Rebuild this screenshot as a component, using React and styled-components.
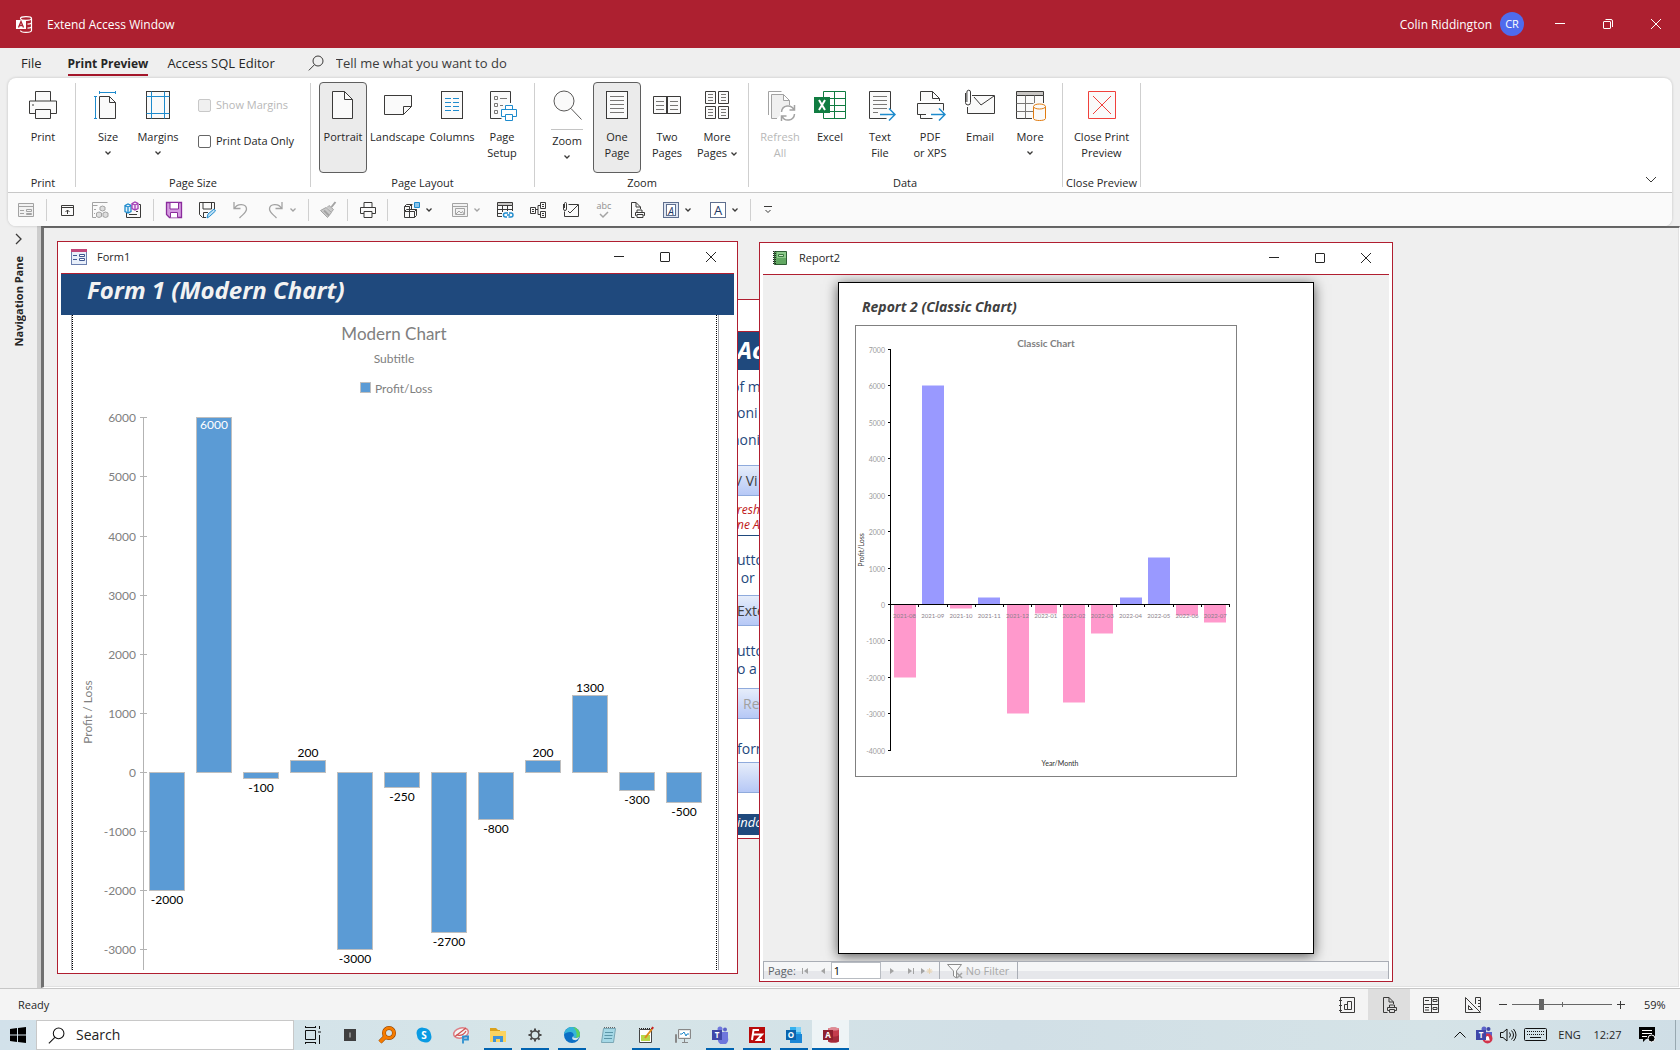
import React from "react";
import styled, { createGlobalStyle } from "styled-components";

const ui = '"Open Sans", "Noto Sans", sans-serif';
const chartFont = 'Lato, "Open Sans", sans-serif';
const red = "#ad2030";
const navy = "#1f497d";

const GlobalStyle = createGlobalStyle`
  *, *::before, *::after { box-sizing: border-box; }
  body { margin: 0; font: 11px/16px ${ui}; color: #262626; background: #efefef; overflow: hidden; }
  button { font: inherit; color: inherit; background: none; border: 0; padding: 0; margin: 0; }
  input { font: inherit; margin: 0; }
  svg { display: block; flex: none; }
`;

const Shell = styled.div`
  height: 100vh;
  display: flex;
  flex-direction: column;
`;

/* ---------- title bar ---------- */
const TitleBar = styled.header`
  display: flex;
  align-items: center;
  height: 48px;
  padding-left: 16px;
  background: ${red};
  color: #fff;
  font-size: 12px;
`;
const AppName = styled.h1`
  margin: 0 0 0 14px;
  padding-top: 2px;
  font-size: 12px;
  font-weight: 400;
  flex: 1;
`;
const UserName = styled.span`
  padding-top: 2px;
  margin-right: 8px;
`;
const Avatar = styled.span`
  width: 24px;
  height: 24px;
  border-radius: 50%;
  background: #4f6bed;
  font-size: 11px;
  line-height: 24px;
  text-align: center;
  margin-right: 12px;
`;
const WinButton = styled.button`
  width: ${(p) => p.$w || 48}px;
  display: grid;
  place-items: center;
  align-self: stretch;
`;

/* ---------- ribbon ---------- */
const TabRow = styled.nav`
  display: flex;
  height: 30px;
  padding: 5px 0 0 21px;
`;
const Tab = styled.button`
  font-size: ${(p) => (p.$active ? 12 : 13)}px;
  font-weight: ${(p) => (p.$active ? 700 : 400)};
  line-height: 21px;
  height: 23px;
  border-bottom: 2px solid ${(p) => (p.$active ? "#a4162a" : "transparent")};
  margin-right: ${(p) => p.$gap}px;
`;
const TellMe = styled.label`
  display: flex;
  align-items: center;
  height: 20px;
  flex: 1;
`;
const TellMeInput = styled.input`
  border: 0;
  outline: 0;
  background: none;
  padding: 0;
  margin-left: 12px;
  width: 220px;
  font-size: 13px;
  &::placeholder { color: #3b3b3b; opacity: 1; }
`;
const RibbonCard = styled.section`
  position: relative;
  z-index: 1;
  margin: 0 8px;
  height: 148px;
  border-radius: 8px;
  background: #fff;
  box-shadow: 0 0 3px rgba(0, 0, 0, 0.2);
  overflow: hidden;
`;
const Groups = styled.div`
  display: flex;
  height: 115px;
  border-bottom: 1px solid #c8c8c8;
`;
const Group = styled.section`
  display: flex;
  flex-direction: column;
  padding: 4px ${(p) => p.$right || 7}px 0 ${(p) => p.$left || 7}px;
`;
const GroupRow = styled.div`
  display: flex;
  height: 93px;
`;
const GroupName = styled.div`
  text-align: center;
  white-space: nowrap;
  line-height: 16px;
`;
const VLine = styled.span`
  width: 1px;
  flex: none;
  margin: 5px 0;
  background: #cfcfcf;
`;
const BigButton = styled.button`
  display: flex;
  flex-direction: column;
  align-items: center;
  width: ${(p) => p.$w || 48}px;
  margin: 0 ${(p) => (p.$w ? 0 : 1)}px;
  height: 91px;
  padding-top: 6px;
  border: 1px solid ${(p) => (p.$on ? "#5f5f5f" : "transparent")};
  border-radius: 4px;
  background: ${(p) => (p.$on ? "#ebebeb" : "none")};
  color: ${(p) => (p.disabled ? "#b8b8b8" : "#262626")};
  white-space: nowrap;
`;
const BigLabel = styled.span`
  margin-top: 8px;
  line-height: 16px;
  ${(p) => p.$split && "border-top: 1px solid #c4c4c4; padding: 3px 1px 0;"}
`;
const Down = styled.span`
  display: ${(p) => (p.$inline ? "inline-grid" : "grid")};
  height: ${(p) => (p.$inline ? 8 : 15)}px;
  margin-left: ${(p) => (p.$inline ? 4 : 0)}px;
  place-items: center;
  align-content: center;
`;
const CheckColumn = styled.div`
  display: flex;
  flex-direction: column;
  gap: 20px;
  padding: 15px 9px 0 15px;
`;
const CheckLabel = styled.label`
  display: flex;
  align-items: center;
  gap: 5px;
  height: 16px;
  color: ${(p) => (p.$off ? "#b8b8b8" : "#262626")};
  white-space: nowrap;
`;
const Check = styled.input`
  appearance: none;
  width: 13px;
  height: 13px;
  border: 1px solid #666;
  border-radius: 2px;
  background: #fff;
  &:disabled { border-color: #c8c8c8; background: #f0f0f0; }
`;
const Collapse = styled.button`
  margin: auto 15px 6px auto;
  width: 12px;
  height: 12px;
`;
const QuickBar = styled.div`
  display: flex;
  align-items: center;
  height: 33px;
  padding-left: 7px;
  background: #fafafa;
`;
const QuickButton = styled.button`
  display: flex;
  align-items: center;
  justify-content: center;
  gap: 5px;
  width: ${(p) => p.$w || 33}px;
  height: 28px;
`;
const QuickLine = styled.span`
  width: 1px;
  height: 22px;
  margin: 0 ${(p) => p.$after || 3}px 0 ${(p) => p.$before || 3}px;
  background: #d0d0d0;
`;

/* ---------- work area ---------- */
const Body = styled.div`
  display: flex;
  flex: 1;
  min-height: 0;
`;
const NavPane = styled.aside`
  width: 37px;
  display: flex;
  flex-direction: column;
  align-items: center;
  padding-top: 7px;
  gap: 11px;
`;
const NavTitle = styled.span`
  writing-mode: vertical-rl;
  transform: rotate(180deg);
  font-weight: 700;
  font-size: 11px;
`;
const Splitter = styled.div`
  width: 4px;
  background: #cdcdcd;
`;
const Workspace = styled.main`
  position: relative;
  flex: 1;
  border-style: solid;
  border-color: #6a6a6a #fff #fff #707070;
  border-width: 2px 1px 1px 3px;
  box-shadow: inset -1px -1px #e1e1e1;
  overflow: hidden;
`;
const Win = styled.section`
  position: absolute;
  left: ${(p) => p.$x}px;
  top: ${(p) => p.$y}px;
  width: ${(p) => p.$w}px;
  height: ${(p) => p.$h}px;
  display: flex;
  flex-direction: column;
  padding: 0 3px ${(p) => (p.$flush ? 2 : 3)}px;
  border: 1px solid #b01e30;
  background: #fff;
`;
const WinTitle = styled.div`
  display: flex;
  align-items: center;
  height: 32px;
  flex: none;
  padding: 0 0 2px 10px;
  border-bottom: 1px solid #b01e30;
`;
const WinName = styled.h2`
  flex: 1;
  margin: 0 0 0 ${(p) => p.$gap}px;
  font-size: 11px;
  font-weight: 400;
`;

/* form window */
const FormHeader = styled.h3`
  margin: 0;
  height: 41px;
  flex: none;
  padding: 0 26px;
  background: ${navy};
  color: #f2f2f2;
  font: italic 700 24px/32px ${ui};
`;
const FormBody = styled.div`
  flex: 1;
  min-height: 0;
  margin: 0 15px 0 10px;
  padding-right: 1px;
  border: solid #a6a6ae;
  border-width: 0 1px;
  overflow: hidden;
`;
const ChartFrame = styled.div`
  height: 100%;
  border: dotted #000;
  border-width: 0 1px;
  overflow: hidden;
`;
const ChartText = styled.text`
  font-family: ${chartFont};
  font-size: ${(p) => p.$s || 12}px;
  font-weight: ${(p) => (p.$b ? 700 : 400)};
  fill: ${(p) => p.$c || "#808080"};
  text-anchor: ${(p) => p.$a || "middle"};
`;

/* launcher form that lies behind the two windows */
const LauncherClip = styled.div`
  flex: 1;
  min-height: 0;
  display: flex;
  flex-direction: column;
  margin-left: 43px;
`;
const Spacer = styled.span`
  flex: 1;
`;
const Banner = styled.div`
  height: ${(p) => p.$h}px;
  flex: none;
  padding-left: 6px;
  background: ${navy};
  color: #fff;
  font: italic ${(p) => (p.$h > 30 ? "700 24px/36px" : "400 13px/17px")} ${ui};
`;
const Note = styled.p`
  margin: ${(p) => p.$top}px 0 0;
  padding-left: ${(p) => p.$in || 0}px;
  color: ${(p) => (p.$red ? "#c01818" : navy)};
  font: ${(p) => (p.$red ? "italic 12px/15px" : "14px/18px")} ${ui};
  white-space: pre;
`;
const FormButton = styled.button`
  margin-top: ${(p) => p.$top}px;
  height: 31px;
  flex: none;
  width: 100%;
  padding-left: ${(p) => p.$in || 6}px;
  border: solid #8faadc;
  border-width: 1px 0;
  background: linear-gradient(#e6edfa, #b6c8f6);
  color: ${(p) => (p.disabled ? "#a0a0a0" : "#404040")};
  font-size: 14px;
  text-align: left;
  white-space: pre;
`;
const Divider = styled.hr`
  margin: 3px 0 0;
  width: 100%;
  border: 0;
  border-top: 1px solid ${navy};
`;

/* report window */
const ReportArea = styled.div`
  flex: 1;
  min-height: 0;
  background: #efefef;
  padding: 7px 75px 0;
  overflow: hidden;
`;
const Paper = styled.article`
  height: 672px;
  padding: 14px 76px 0 16px;
  background: #fff;
  border: 1px solid #000;
  box-shadow: 0 2px 12px rgba(0, 0, 0, 0.65);
`;
const ReportTitle = styled.h3`
  margin: 0 0 8px 7px;
  font: italic 700 14px/20px ${ui};
  color: #404040;
`;
const ReportChart = styled.div`
  height: 452px;
  border: 1px solid #808080;
  overflow: hidden;
`;
const RecordBar = styled.div`
  display: flex;
  align-items: stretch;
  height: 18px;
  flex: none;
  border: 1px solid #a9adb5;
  border-bottom: 0;
  background: linear-gradient(#f5f6f7 55%, #e6e7eb 55%);
  color: #5b5f66;
  line-height: 18px;
`;
const PageLabel = styled.label`
  display: flex;
  padding-left: 4px;
`;
const PageInput = styled.input`
  width: 50px;
  height: 17px;
  padding: 0 0 0 2px;
  border: 1px solid #b8bcc2;
  background: #fff;
  color: #000;
`;
const RecordButton = styled.button`
  width: ${(p) => p.$w || 16}px;
  display: grid;
  place-items: center;
`;
const FilterButton = styled.button`
  display: flex;
  align-items: center;
  gap: 3px;
  margin-left: 4px;
  padding: 0 8px 0 7px;
  border: solid #a9adb5;
  border-width: 0 1px;
  color: #a8a8a8;
`;

/* ---------- status bar ---------- */
const StatusBar = styled.footer`
  display: flex;
  align-items: center;
  height: 32px;
  border-top: 1px solid #c6c6c6;
  background: #f4f4f4;
  padding-left: 18px;
`;
const Grow = styled.span`
  flex: 1;
`;
const ViewButton = styled.button`
  width: 42px;
  align-self: stretch;
  display: grid;
  place-items: center;
  background: ${(p) => (p.$on ? "#dedede" : "none")};
`;
const ZoomStep = styled.button`
  width: 18px;
  height: 18px;
  display: grid;
  place-items: center;
`;
const ZoomRange = styled.input`
  appearance: none;
  width: 100px;
  height: 12px;
  background:
    linear-gradient(#666, #666) 50px 50% / 1px 5px no-repeat,
    linear-gradient(#666, #666) 0 50% / 100% 1px no-repeat;
  &::-webkit-slider-thumb { appearance: none; width: 5px; height: 11px; background: #666; }
`;
const ZoomValue = styled.output`
  width: 22px;
  margin: 0 14px;
`;

/* ---------- taskbar ---------- */
const Taskbar = styled.footer`
  display: flex;
  height: 30px;
  background: linear-gradient(90deg, #d2e1ea, #d6e5e8 35%, #d1dfe6 60%, #d5e3e7 85%, #cfdee6);
`;
const Start = styled.button`
  width: 36px;
  display: grid;
  place-items: center;
`;
const SearchBox = styled.label`
  display: flex;
  align-items: center;
  width: 258px;
  border: 1px solid #c8c8c8;
  background: #fff;
  padding-left: 11px;
`;
const SearchInput = styled.input`
  border: 0;
  outline: 0;
  width: 180px;
  margin-left: 11px;
  padding: 0;
  font-size: 14px;
  &::placeholder { color: #222; opacity: 1; }
`;
const TaskButton = styled.button`
  width: 37px;
  display: grid;
  place-items: center;
  padding-top: 2px;
  border-bottom: 2px solid transparent;
  background:
    linear-gradient(${(p) => (p.$run ? "#0063b1, #0063b1" : "transparent, transparent")}) 50% 100% / ${(p) => (p.$on ? "100%" : "28px")} 2px no-repeat border-box,
    ${(p) => (p.$on ? "#eef4f6" : "transparent")};
`;
const Tray = styled.div`
  display: flex;
  align-items: center;
  margin-left: auto;
  padding-right: 4px;
`;
const TrayItem = styled.button`
  width: ${(p) => p.$w}px;
  height: 30px;
  display: grid;
  place-items: center;
`;
const ShowDesktop = styled.span`
  width: 1px;
  margin-left: 9px;
  align-self: stretch;
  background: #98a8b0;
`;

/* ---------- icon helpers ---------- */
const K = "#3b3a39";
const G = "#a3a3a3";
const B = "#1e8bcd";

function Ico({ s = 32, w = s, h = s, c = K, sw = 1, children }) {
  return (
    <svg width={w} height={h} viewBox={`0 0 ${w} ${h}`} fill="none" stroke={c} strokeWidth={sw} aria-hidden="true">
      {children}
    </svg>
  );
}
const Chevron = ({ c = K, w = 6 }) => (
  <Ico w={w} h={w} c={c} sw={w > 8 ? 1 : 1.3}>
    <path d={w > 8 ? `M1 3l${w / 2 - 1} ${w / 2 - 1} ${w / 2 - 1}-${w / 2 - 1}` : "M.5 1.5L3 4l2.5-2.5"} />
  </Ico>
);
const Lens = ({ s = 16, c = K }) => (
  <svg width={s} height={s} viewBox="0 0 16 16" fill="none" stroke={c} aria-hidden="true">
    <circle cx="10" cy="6" r="5" />
    <path d="M6.5 9.7L.8 15.4" />
  </svg>
);
const Minimise = () => <Ico s={12} c="currentColor"><path d="M1 5.5h10" /></Ico>;
const Maximise = () => <Ico s={12} c="currentColor"><rect x="1.5" y="1.5" width="9" height="9" rx=".5" /></Ico>;
const Cross = () => <Ico s={12} c="currentColor"><path d="M1 1l10 10M11 1L1 11" /></Ico>;
const Restore = () => (
  <Ico s={12} c="currentColor"><rect x="1.5" y="3.5" width="7" height="7" rx=".5" /><path d="M3.5 1.5h5.5q1.500 0 1.500 1.500V9" /></Ico>
);

const printer = (
  <>
    <path fill="#fafafa" d="M8.500 12V2.500h15V12M8.500 24.500h-6v-12.500h27v12.500h-6" />
    <path fill="#fafafa" d="M8.500 20.500h15v9h-15z" />
    <path d="M5 16h2" />
  </>
);
const rows = (x, w, ys) => ys.map((y) => `M${x} ${y}h${w}`).join("");

const ICONS = {
  print: <Ico>{printer}</Ico>,
  size: (
    <Ico>
      <path fill="#fafafa" d="M7.500 7.500h10l6 6v16h-16z" /><path d="M17.500 7.500v6h6" />
      <path stroke={B} d="M7.500 3.500h16M7.500 2v3M23.500 2v3M3.500 7.500v22M2 7.500h3M2 29.500h3" />
    </Ico>
  ),
  margins: (
    <Ico>
      <rect x="4.500" y="2.500" width="23" height="27" fill="#fafafa" />
      <path stroke={B} d="M9.500 2.500v27M22.500 2.500v27M4.500 7.500h23M4.500 24.500h23" />
    </Ico>
  ),
  portrait: <Ico><path fill="#fafafa" d="M5.500 2.500h12l8 8v19h-20z" /><path d="M17.500 2.500v8h8" /></Ico>,
  landscape: <Ico><path fill="#fafafa" d="M2.500 6.500h27v11l-8 8h-19z" /><path d="M29.500 17.500h-8v8" /></Ico>,
  columns: (
    <Ico>
      <rect x="5.500" y="2.500" width="21" height="27" fill="#fafafa" />
      <path stroke={B} d={rows(9, 6, [9.5, 13.5, 17.5, 21.5]) + rows(17, 6, [9.5, 13.5, 17.5, 21.5])} />
    </Ico>
  ),
  pageSetup: (
    <Ico>
      <path fill="#fafafa" d="M24.500 14V2.500h-20v27h11" />
      <path stroke="#797775" d="M8.500 7.500h3v3h-3zM8.500 14.500h3v3h-3zM8.500 21.500h3v3h-3zM14 9.500h7M14 16.500h3" />
      <path stroke={B} fill="#fff" d="M19.500 20v-3.500h7V20M19.500 27.500h-4v-7h15v7h-4M19.500 25.500h7v6h-7z" />
    </Ico>
  ),
  zoom: <Ico c="#5a5958"><circle cx="13" cy="12" r="10" fill="#fafafa" /><path d="M20 19.500L30.500 30.500" /></Ico>,
  onePage: (
    <Ico><rect x="5.500" y="2.500" width="21" height="27" fill="#fafafa" /><path stroke="#797775" d={rows(9, 14, [7.5, 11.5, 15.5, 19.5, 23.5])} /></Ico>
  ),
  twoPages: (
    <Ico>
      <path fill="#fafafa" d="M2.500 7.500h27v17h-27zM15.500 7.500v17M16.500 7.500v17" />
      <path stroke="#797775" d={rows(5, 8, [12.5, 16.5, 20.5]) + rows(19, 8, [12.5, 16.5, 20.5])} />
    </Ico>
  ),
  morePages: (
    <Ico>
      <path fill="#fafafa" d="M4.500 2.500h10v12h-10zM17.500 2.500h10v12h-10zM4.500 17.500h10v12h-10zM17.500 17.500h10v12h-10z" />
      <path stroke="#797775" d={[5.5, 8.5, 11.5, 20.5, 23.5, 26.5].map((y) => `M7 ${y}h5M20 ${y}h5`).join("")} />
    </Ico>
  ),
  refresh: (
    <Ico c={G}>
      <path d="M4.500 26V2.500h13" /><path fill="#f0f0f0" d="M13 29.500H7.500v-24h12l6 6v5M19.500 5.500v6h6" />
      <circle cx="24" cy="24" r="8" fill="#fff" stroke="none" />
      <path strokeWidth="1.500" d="M17.500 23a6.500 6.500 0 0 1 12.500-2M30.500 16v5h-5M30.500 25a6.500 6.500 0 0 1-12.500 2M17.500 32v-5h5" />
    </Ico>
  ),
  excel: (
    <Ico c="#107c41">
      <path fill="#fff" d="M9.500 2.500h22v27h-22zM20.500 2.500v27M9.500 9.500h22M9.500 16.500h22M9.500 22.500h22" />
      <path fill="#107c41" stroke="none" d="M0 8h16v16H0z" /><path stroke="#fff" strokeWidth="2" d="M5 11l6 10M11 11L5 21" />
    </Ico>
  ),
  textFile: (
    <Ico>
      <path fill="#fafafa" d="M26.500 20V2.500h-21v27h17" />
      <path stroke="#797775" d={rows(9, 14, [7.5, 11.5, 15.5, 19.5]) + rows(9, 5, [23.5])} />
      <path stroke={B} strokeWidth="1.500" d="M16 25.500h15M25 19.500l6 6-6 6" />
    </Ico>
  ),
  pdf: (
    <Ico>
      <path fill="#fafafa" d="M6.500 12V2.500h12l7 7V12M18.500 2.500v7h7M6.500 25v4.500h12" />
      <path fill="#fafafa" d="M12 25.500H3.500v-11h26v7" />
      <path stroke={B} strokeWidth="1.500" d="M17 25.500h14M25 19.500l6 6-6 6" />
    </Ico>
  ),
  email: (
    <Ico>
      <path fill="#fafafa" d="M8 6.500h22.500v18h-27V18" /><path d="M10 8l7 8 13-9" />
      <path d="M1.500 4v9.500a2.500 2.500 0 0 0 5 0V3a1.800 1.800 0 0 0-3.600 0v10" />
    </Ico>
  ),
  more: (
    <Ico>
      <rect x="2.500" y="2.500" width="27" height="27" fill="#fafafa" stroke="none" />
      <path fill="#c8c6c4" d="M2.500 2.500h27v4h-27z" />
      <path d="M2.500 6.500v23H18M29.500 6.500V14" /><path stroke="#797775" d="M11.500 6.500v23M20.500 6.500V14M2.500 14.500h17M2.500 22.500h17" />
      <path stroke="#e07b10" fill="#fafafa" d="M19.500 17.500v12c0 2.700 12 2.700 12 0v-12" /><ellipse cx="25.500" cy="17.500" rx="6" ry="2.500" stroke="#e07b10" fill="#fafafa" />
    </Ico>
  ),
  close: <Ico c="#f0413c"><path fill="#fafafa" d="M2.500 2.500h27v27h-27z" /><path d="M7 7l18 18M25 7L7 25" /></Ico>,
};

/* 18px drawings of the quick access toolbar */
const Q = {
  form: <Ico s={18} c={G}><path fill="#f2f2f2" d="M1.500 2.500h15v13h-15zM1.500 5.500h15M9.500 8.500h5v2h-5zM9.500 12.500h5v1h-5zM3 9.500h4M3 12.500h4" /></Ico>,
  dock: <Ico s={18}><path d="M3.500 4.500h12v10h-12zM3.500 6.500h12M9.500 13V9M7.500 11l2-2 2 2" /></Ico>,
  cubes: <Ico s={18} c={G}><path d="M5 16.500H1.500V1.500h15M1.500 4.500h5M3 8.500h2M3 12.500h1" /><path fill="#dedede" d="M9 6l2.500-1L14 6v3l-2.500 1L9 9zM5.500 12l2.500-1 2.500 1v3.500L8 16.500l-2.500-1zM12 12l2.500-1 2.500 1v3.500l-2.500 1-2.500-1z" /></Ico>,
  colorCubes: <Ico s={18}><path d="M2.500 12v4.500h14v-13H15M5 13.500h8M12 10.500h2" /><path fill="#e3f2fb" stroke={B} strokeWidth="1.300" d="M1 4.500L4 3l3 1.500v6L4 12l-3-1.500zM1 4.500L4 6l3-1.500M4 6v6" /><path fill="#f6e6f8" stroke="#a33fb5" strokeWidth="1.300" d="M8 2.500L11 1l3 1.500v5L11 9 8 7.500zM8 2.500L11 4l3-1.500M11 4v5" /></Ico>,
  save: <Ico s={18} c="#8a2c9c"><path fill="#d59be0" strokeWidth="1.300" d="M1.500 1.500h15v15h-12l-3-3z" /><path fill="#fff" d="M5 1.500h8.500V8H5zM5.500 16.500v-5h7v5" /></Ico>,
  saveAs: <Ico s={18}><path d="M16.500 8V1.500h-15v12l3 3H8M5 1.500V8h8.500V1.500M5.500 16.500v-5H10" /><path stroke={B} fill="#bfe0f5" d="M9 17l1-4 6-5 1.500 2-6 5.500z" /></Ico>,
  undo: <Ico s={18} c={G} sw={1.3}><path d="M3 1v6.500h6.500M3.500 7.500C6 2 15.500 2.500 15.500 8c0 3-2 4-7 9" /></Ico>,
  redo: <Ico s={18} c={G} sw={1.3}><path d="M15 1v6.500H8.500M14.500 7.500C12 2 2.500 2.500 2.500 8c0 3 2 4 7 9" /></Ico>,
  brush: <Ico s={18} c={G}><path fill="#c9c9c9" d="M1.500 9.500L7 6.500l5.500 5-4 5zM8 6.500l2-2 4.500 4-2 2.500" /><path strokeWidth="2" d="M12.500 6l4-5M5 9.500l5 5" /></Ico>,
  print: <Ico s={18}><path d="M5 6V1.500h8V6M5 12.500H1.500v-6h15v6H13M5 10.500h8v6H5z" /></Ico>,
  blocks: <Ico s={18}><path d="M1.500 10.500l2-2h10l-2 2zM1.500 10.500v6h10v-6M6.500 10.500v6M11.500 16.500l2-2v-6M1.500 10V5.500l2-2h6M1.500 5.500h5v5M6.500 5.500l2-2M8.500 8V4" /><path fill="#8cc4ea" stroke={B} d="M11.500 1.500h5v5h-5z" /></Ico>,
  picture: <Ico s={18} c={G}><path fill="#f2f2f2" d="M1.500 2.500h15v13h-15zM1.500 5.500h15M4.500 7.500h9v6h-9zM5 13l3-3 2 2 1.500-1.500L13 13" /></Ico>,
  linkTable: <Ico s={18}><path fill="#c8c6c4" d="M1.500 1.500h15v3h-15z" /><path d="M1.500 4.500v11H6M16.500 4.500V10M6.500 4.500V11M11.500 4.500V10M1.500 8.500h15M1.500 12.500H6" /><path stroke={B} strokeWidth="1.400" d="M11 16H9.500a2 2 0 0 1 0-4H12M13 12h2a2 2 0 0 1 0 4h-2.500M11 14h3" /></Ico>,
  relations: <Ico s={18}><path d="M1.500 6.500h5v6h-5zM11.500 1.500h5v6h-5zM11.500 10.500h5v6h-5zM6.500 8.500h2.500v-4h2.500M9 8.500v5h2.500M3 8.500h2M3 10.500h2M13 3.500h2M13 5.500h2M13 12.500h2M13 14.500h2" /></Ico>,
  mail: <Ico s={18}><path d="M6.500 3.500h10v12h-14V10.500M6 10l2 2 8-8M1.500 3v5a1.500 1.500 0 0 0 3 0V2.500a1 1 0 0 0-2 0V7" /></Ico>,
  preview: <Ico s={18}><path d="M12.500 8V6l-4.500-4.500H3.500v15h3M8 1.500V6h4.500M9 11V9h5v2M8.500 14.500h-1v-3h9v3h-1M9 13.500h6v3H9z" /></Ico>,
};
const letter = (boxed) => (
  <svg width="18" height="18" viewBox="0 0 18 18" aria-hidden="true">
    <rect x="1.500" y="1.500" width="15" height="15" fill={boxed ? "#dfe6f2" : "#fff"} stroke="#5f6f8f" />
    {boxed && <rect x="4.500" y="3.500" width="9" height="11" fill="#fff" stroke="#5f6f8f" />}
    <text x="9" y="14" textAnchor="middle" fontFamily="Open Sans" fontSize={boxed ? 10 : 13} fontStyle={boxed ? "italic" : "normal"} fill="#1f3864">A</text>
  </svg>
);
const abc = (
  <svg width="20" height="24" viewBox="0 0 20 24" aria-hidden="true">
    <text x="10" y="11" textAnchor="middle" fontFamily="Open Sans" fontSize="9" fill="#8f8f8f">abc</text>
    <path d="M6 16l3 3 5-5" fill="none" stroke={G} strokeWidth="1.500" />
  </svg>
);

/* ---------- data ---------- */
const MONTHS = ["2021-08", "2021-09", "2021-10", "2021-11", "2021-12", "2022-01", "2022-02", "2022-03", "2022-04", "2022-05", "2022-06", "2022-07"];
const VALUES = [-2000, 6000, -100, 200, -3000, -250, -2700, -800, 200, 1300, -300, -500];

function ModernChart() {
  const y = (v) => 457.5 - Math.round((v * 59.1) / 1000);
  return (
    <svg width="643" height="655" viewBox="0 0 643 655" role="img" aria-label="Modern Chart">
      <ChartText x="321" y="25" $s={17}>Modern Chart</ChartText>
      <ChartText x="321" y="48">Subtitle</ChartText>
      <rect x="287.5" y="67.5" width="10" height="10" fill="#5b9bd5" stroke="#bfbfbf" />
      <ChartText x="302" y="78" $a="start">Profit/Loss</ChartText>
      <ChartText transform="translate(19 397) rotate(-90)">Profit / Loss</ChartText>
      <path stroke="#b3b3b3" d="M70.5 102.500V655" />
      {[6000, 5000, 4000, 3000, 2000, 1000, 0, -1000, -2000, -3000].map((v) => (
        <React.Fragment key={v}>
          <path stroke="#b3b3b3" d={`M67 ${y(v)}h7`} />
          <ChartText x="63" y={y(v) + 4} $a="end">{v}</ChartText>
        </React.Fragment>
      ))}
      {VALUES.map((v, i) => {
        const x = 76.5 + Math.round(47.04 * i);
        const ly = v === 6000 ? y(v) + 11 : v > 0 ? y(v) - 4 : y(v) + 13;
        return (
          <React.Fragment key={i}>
            <rect x={x} y={Math.min(y(v), y(0))} width="35" height={Math.abs(y(v) - y(0))} fill="#5b9bd5" stroke="#bfbfbf" />
            <ChartText x={x + 17.5} y={ly} $c={v === 6000 ? "#fff" : "#000"}>{v}</ChartText>
          </React.Fragment>
        );
      })}
    </svg>
  );
}

function ClassicChart() {
  const y = (v) => 278.5 - Math.round((v * 36.45) / 1000);
  return (
    <svg width="380" height="450" viewBox="0 0 380 450" role="img" aria-label="Classic Chart">
      <ChartText x="190" y="21" $s={10} $b>Classic Chart</ChartText>
      <ChartText transform="translate(8 224) rotate(-90)" $s={7} $c="#404040">Profit/Loss</ChartText>
      <ChartText x="204" y="440" $s={7} $c="#303030">Year/Month</ChartText>
      {VALUES.map((v, i) => (
        <rect key={i} x={Math.round(37.5 + 28.25 * i)} y={Math.min(y(v), y(0))} width="22" height={Math.abs(y(v) - y(0))} fill={v > 0 ? "#9999ff" : "#ff99cc"} />
      ))}
      <path stroke="#000" d={`M34.5 ${y(7000)}V${y(-4000)}M34.5 278.500H373.500`} />
      {[7000, 6000, 5000, 4000, 3000, 2000, 1000, 0, -1000, -2000, -3000, -4000].map((v) => (
        <React.Fragment key={v}>
          <path stroke="#000" d={`M32 ${y(v)}h3`} />
          <ChartText x="29" y={y(v) + 3} $a="end" $s={7} $c="#9a9a9a">{v}</ChartText>
        </React.Fragment>
      ))}
      {MONTHS.map((m, i) => (
        <React.Fragment key={m}>
          <path stroke="#000" d={`M${Math.round(34 + 28.25 * (i + 1)) + 0.5} 278v3`} />
          <ChartText x={48.5 + 28.25 * i} y="292" $s={6} $c="#8a808a">{m}</ChartText>
        </React.Fragment>
      ))}
    </svg>
  );
}

/* ---------- small building blocks ---------- */
function Big({ icon, lines, down, split, ...rest }) {
  return (
    <BigButton {...rest}>
      {ICONS[icon]}
      <BigLabel $split={split}>
        {lines.map((l, i) => (
          <React.Fragment key={l}>
            {i > 0 && <br />}
            {l}
          </React.Fragment>
        ))}
        {down === "inline" && <Down $inline><Chevron /></Down>}
      </BigLabel>
      {down === true && <Down><Chevron /></Down>}
    </BigButton>
  );
}

function RibbonGroup({ name, left, right, children }) {
  return (
    <>
      <Group $left={left} $right={right}>
        <GroupRow>{children}</GroupRow>
        <GroupName>{name}</GroupName>
      </Group>
      <VLine />
    </>
  );
}

function MdiWindow({ title, icon, gap, controls = true, children, ...box }) {
  return (
    <Win {...box}>
      <WinTitle>
        {icon}
        <WinName $gap={gap}>{title}</WinName>
        {controls && (
          <>
            <WinButton $w={46} aria-label="Minimise"><Minimise /></WinButton>
            <WinButton $w={46} aria-label="Maximise"><Maximise /></WinButton>
            <WinButton $w={46} aria-label="Close"><Cross /></WinButton>
          </>
        )}
      </WinTitle>
      {children}
    </Win>
  );
}

function LauncherBody() {
  return (
    <LauncherClip>
      <Banner $h={38}>Ac</Banner>
      <Note $top={8}>of m</Note>
      <Note $top={8} $in={6}>oni</Note>
      <Note $top={9}>noni</Note>
      <FormButton $top={16}>{"/ Vi"}</FormButton>
      <Note $red $top={6} $in={6}>{"resh\nne A"}</Note>
      <Divider />
      <Note $top={15} $in={6}>{"utto\n or n"}</Note>
      <FormButton $top={8}>Exte</FormButton>
      <Note $top={16} $in={6}>{"utto\no a s"}</Note>
      <FormButton $top={10} $in={12} disabled>Re</FormButton>
      <Note $top={21} $in={6}>forn</Note>
      <FormButton $top={4} />
      <Spacer />
      <Banner $h={21}>indo</Banner>
    </LauncherClip>
  );
}

const formIcon = (
  <svg width="16" height="16" viewBox="0 0 16 16" aria-hidden="true">
    <rect x=".5" y=".5" width="15" height="15" fill="#e8effa" stroke="#6b7fae" />
    <path fill="#c2477a" d="M0 0h16v3H0z" />
    <path d="M2 6.500h4M2 10.500h4M8.500 5.500h5v2h-5zM8.500 9.500h5v2h-5z" fill="#fff" stroke="#3f568f" />
  </svg>
);
const reportIcon = (
  <svg width="14" height="14" viewBox="0 0 14 14" aria-hidden="true">
    <path fill="#62a862" stroke="#2f5f35" d="M1.500.5h12v13h-12z" />
    <path fill="#8cc98a" d="M4 1h9v6H4z" />
    <path fill="#cfe8c8" stroke="#3b7a40" d="M5.500 3.500h5v2h-5z" />
    <path stroke="#222" strokeDasharray="1 1" d="M.5 0v14M2.500 0v14" />
  </svg>
);
const accessLogo = (
  <svg width="17" height="17" viewBox="0 0 17 17" fill="none" stroke="#fff" strokeWidth="1.200" aria-hidden="true">
    <ellipse cx="10" cy="2.500" rx="5.500" ry="1.800" /><path d="M15.500 2.500v12c0 2.500-11 2.500-11 0M15.500 6.500c0 1-2 1.500-4 1.700M15.500 10.500c0 1-2 1.500-4 1.700" />
    <path fill="#fff" stroke="none" d="M0 4h10v9H0z" /><path stroke={red} strokeWidth="1.300" d="M2.500 11.500L5 5.500l2.500 6M3.500 9.500h3" />
  </svg>
);

/* ---------- taskbar drawings ---------- */
const T = (children) => <svg width="18" height="18" viewBox="0 0 18 18" fill="none" aria-hidden="true">{children}</svg>;
const tile = (fill, l, extra) => T(<>{extra}<path fill={fill} d="M1 4h10v10H1z" /><text x="6" y="12" textAnchor="middle" fontFamily="Open Sans" fontWeight="700" fontSize="8" fill="#fff">{l}</text></>);
const TASKS = [
  ["Task View", T(<path stroke="#111" d="M1 1.500h11M1 16.500h11M1.500 4.500h10v9h-10zM1.500 0v2M11.500 0v2M1.500 16v2M11.500 16v2M15.500 0v3M15.500 9v9M14 6h3" />)],
  ["Notes", T(<><path fill="#3f3f3f" d="M3 3h12v12H3z" /><path stroke="#ccc" d="M9 6.500v5" /></>)],
  ["Search tool", T(<><path stroke="#8a3f00" strokeWidth="4.500" d="M7.500 10.500L2 16" /><circle cx="11" cy="7" r="5" stroke="#8a3f00" strokeWidth="4" /><circle cx="11" cy="7" r="5" stroke="#f57c00" strokeWidth="3" /><path stroke="#f57c00" strokeWidth="3.500" d="M7.500 10.500L2 16" /></>)],
  ["Skype", T(<><circle cx="7" cy="7" r="5.500" fill="#0a9be3" /><circle cx="11" cy="11" r="5.500" fill="#0a9be3" /><circle cx="9" cy="9" r="7" fill="#0a9be3" /><text x="9" y="13" textAnchor="middle" fontFamily="Open Sans" fontWeight="700" fontSize="10" fill="#fff">S</text></>)],
  ["Snipping Tool", T(<><ellipse cx="9" cy="7" rx="7.500" ry="5" transform="rotate(-15 9 7)" fill="#f4f4f4" stroke="#dd7f86" strokeWidth="1.500" /><path stroke="#d05050" strokeWidth="1.200" d="M3 10.500L14 2M4 9c4 1 8 0 10-4" /><path stroke="#2d8fd0" strokeWidth="1.800" d="M11 9.500v8M11 10.500h6M12 13.500h4v-3" /></>)],
  ["File Explorer", T(<><path fill="#dba21c" d="M1 2h6l2 2h2v2H1z" /><path fill="#fbd35f" d="M1 5h16v11H1z" /><path fill="#3f93d8" d="M4 10h10v6h-3v-3H7v3H4z" /></>), 1],
  ["Settings", T(<><circle cx="9" cy="9" r="4" stroke="#4a4a4a" strokeWidth="1.600" /><path stroke="#4a4a4a" strokeWidth="2" d="M9 2.500V5M9 13v2.500M2.500 9H5M13 9h2.500M4.400 4.400L6 6M12 12l1.600 1.600M4.400 13.600L6 12M12 6l1.600-1.600" /></>), 1],
  ["Edge", T(<><circle cx="9" cy="9" r="8" fill="#0c6fc5" /><path fill="#36b5d8" d="M1 8.500C2 3.500 5 1 9 1s8 3.500 8 7.500c0 2.500-2 3.500-4.500 3.500-2 0-3-.8-2-2 .8-1.500-.5-4-3.500-4-2.500 0-5 1-6 2.500z" /><path fill="#5fd35c" d="M10 1.100A8 8 0 0 1 17 8.500c0 2.500-2 3.500-4 3.500 1.500-4 .5-8-3-10.900z" /><path fill="#d4e4ec" d="M10.500 10c-.8 1.200.2 2 2 2 1.500 0 3-.4 3.800-1.200-1 3-3.300 3.700-5.300 3.200-2-.5-2.500-2.500-.5-4z" /></>), 1],
  ["Notepad", T(<><path fill="#a5d8e6" stroke="#7aa7b5" d="M3.500 2.500h12l-2 14h-12z" /><path stroke="#5b96a8" d="M5 6.500h8M4.500 9.500h8M4 12.500h8" /><path stroke="#666" strokeDasharray="1 1" d="M4 1.500h12" /></>)],
  ["Notepad++", T(<><path fill="#fff" stroke="#444" d="M2.500 3.500h12v13h-12z" /><path fill="#b7d84b" d="M4 9h9v6H4z" /><path stroke="#222" strokeDasharray="1 1" d="M2 2.500h13" /><path stroke="#e08a1c" strokeWidth="2" d="M8 12l7-9" /><path stroke="#c22" strokeWidth="2" d="M15 3l1-2" /></>), 1],
  ["Monitor", T(<><path fill="#e6e6e6" stroke="#888" d="M4.500 3.500h12v9h-12zM8 16.500h6M10.500 13v3M1.500 8.500h1v8h-1z" /><path fill="#fff" d="M6 5h9v6H6z" /><path stroke="#1c86c8" d="M6 8h2l2-2 2 4 1-2h2" /></>)],
  ["Teams", tile("#3f47a8", "T", <><circle cx="14" cy="3.500" r="2" fill="#5b62c8" /><circle cx="9" cy="3" r="2.500" fill="#6f77dd" /><path fill="#6f77dd" d="M6 6h11v6a5 5 0 0 1-10 3z" /></>), 1],
  ["FileZilla", T(<><path fill="#b90a0a" d="M1 1h16v16H1z" /><path stroke="#fff" strokeWidth="2" d="M4 14l1.500-10H11M5 8.500h4M9 8.500h5l-5 5.500h5" /></>), 1],
  ["Outlook", tile("#0a64ad", "O", <><path fill="#35b1ee" d="M5 1h11v9H5z" /><path fill="#1a86d6" d="M5 8h12v9H5z" /><path fill="#7fd0f7" d="M11 1h5v5h-5z" /></>), 1],
  ["Access", tile("#8f1f2e", "A", <><path fill="#c43c4c" d="M6 3c0-2 11-2 11 0v12c0 2-11 2-11 0z" /><path fill="#a32a3a" d="M6 9c2 2 9 2 11 0v6c0 2-11 2-11 0z" /><ellipse cx="11.500" cy="3" rx="5.500" ry="1.500" fill="#e08a94" /></>), 1, 1],
];

const VIEWS = [
  ["Report View", <Ico s={18} key="r"><path d="M2.500 1.500h14v15h-14zM1 4.500h3M1 9.500h3M1 14.500h3M6.500 8.500h3v5h-3zM9.500 5.500h4v8h-4z" /></Ico>],
  ["Print Preview", <Ico s={18} key="p"><path d="M13.500 8V6L9 1.500H3.500v15h4M9 1.500V6h4.500M9.500 11V9h5v2M9 14.500H7.500v-3h9v3H15M9.500 13.500h5v3h-5z" /></Ico>],
  ["Layout View", <Ico s={18} key="l"><path d="M1.500 1.500h15v15h-15zM9.500 1.500v15M1.500 8.500h15M11 3.500h4v2h-4zM11 11.500h4v2h-4zM3 4.500h4M3 11.500h4M3 14h4" /></Ico>],
  ["Design View", <Ico s={18} key="d"><path d="M1.500 1.500l15 15h-15zM4.500 9.500v4h4zM11.500 8V1.500h5v13M14 4.500h2M14 7.500h2M14 10.500h2" /></Ico>],
];

export default function App() {
  return (
    <Shell>
      <GlobalStyle />
      <TitleBar>
        {accessLogo}
        <AppName>Extend Access Window</AppName>
        <UserName>Colin Riddington</UserName>
        <Avatar>CR</Avatar>
        <WinButton aria-label="Minimise"><Minimise /></WinButton>
        <WinButton aria-label="Restore"><Restore /></WinButton>
        <WinButton aria-label="Close"><Cross /></WinButton>
      </TitleBar>

      <TabRow>
        <Tab $gap={26}>File</Tab>
        <Tab $active $gap={19}>Print Preview</Tab>
        <Tab $gap={33}>Access SQL Editor</Tab>
        <TellMe>
          <Lens />
          <TellMeInput placeholder="Tell me what you want to do" aria-label="Tell me what you want to do" />
        </TellMe>
      </TabRow>

      <RibbonCard>
        <Groups>
          <RibbonGroup name="Print" left={10}>
            <Big icon="print" lines={["Print"]} />
          </RibbonGroup>
          <RibbonGroup name="Page Size">
            <Big icon="size" lines={["Size"]} down />
            <Big icon="margins" lines={["Margins"]} down />
            <CheckColumn>
              <CheckLabel $off><Check type="checkbox" disabled />Show Margins</CheckLabel>
              <CheckLabel><Check type="checkbox" />Print Data Only</CheckLabel>
            </CheckColumn>
          </RibbonGroup>
          <RibbonGroup name="Page Layout">
            <Big icon="portrait" lines={["Portrait"]} $on />
            <Big icon="landscape" lines={["Landscape"]} $w={59} />
            <Big icon="columns" lines={["Columns"]} />
            <Big icon="pageSetup" lines={["Page", "Setup"]} />
          </RibbonGroup>
          <RibbonGroup name="Zoom" right={6}>
            <Big icon="zoom" lines={["Zoom"]} split down />
            <Big icon="onePage" lines={["One", "Page"]} $on />
            <Big icon="twoPages" lines={["Two", "Pages"]} />
            <Big icon="morePages" lines={["More", "Pages"]} down="inline" />
          </RibbonGroup>
          <RibbonGroup name="Data" left={6}>
            <Big icon="refresh" lines={["Refresh", "All"]} disabled />
            <Big icon="excel" lines={["Excel"]} />
            <Big icon="textFile" lines={["Text", "File"]} />
            <Big icon="pdf" lines={["PDF", "or XPS"]} />
            <Big icon="email" lines={["Email"]} />
            <Big icon="more" lines={["More"]} down />
          </RibbonGroup>
          <RibbonGroup name="Close Preview" left={3} right={3}>
            <Big icon="close" lines={["Close Print", "Preview"]} $w={71} />
          </RibbonGroup>
          <Collapse aria-label="Collapse ribbon"><Chevron w={12} /></Collapse>
        </Groups>
        <QuickBar>
          <QuickButton $w={22}>{Q.form}</QuickButton>
          <QuickLine $before={9} />
          <QuickButton>{Q.dock}</QuickButton>
          <QuickButton>{Q.cubes}</QuickButton>
          <QuickButton>{Q.colorCubes}</QuickButton>
          <QuickLine $before={4} />
          <QuickButton>{Q.save}</QuickButton>
          <QuickButton>{Q.saveAs}</QuickButton>
          <QuickButton>{Q.undo}</QuickButton>
          <QuickButton $w={50}>{Q.redo}<Chevron c={G} /></QuickButton>
          <QuickLine $before={2} $after={2} />
          <QuickButton>{Q.brush}</QuickButton>
          <QuickLine />
          <QuickButton>{Q.print}</QuickButton>
          <QuickLine $after={4} />
          <QuickButton $w={50}>{Q.blocks}<Chevron /></QuickButton>
          <QuickButton $w={46}>{Q.picture}<Chevron c={G} /></QuickButton>
          <QuickButton>{Q.linkTable}</QuickButton>
          <QuickButton>{Q.relations}</QuickButton>
          <QuickButton>{Q.mail}</QuickButton>
          <QuickButton>{abc}</QuickButton>
          <QuickButton>{Q.preview}</QuickButton>
          <QuickButton $w={47}>{letter(true)}<Chevron /></QuickButton>
          <QuickButton $w={47}>{letter(false)}<Chevron /></QuickButton>
          <QuickLine />
          <QuickButton $w={27} aria-label="Customise"><Ico s={10}><path d="M1 1.500h8M2.500 5L5 7.500 7.500 5" /></Ico></QuickButton>
        </QuickBar>
      </RibbonCard>

      <Body>
        <NavPane>
          <button aria-label="Open navigation pane"><Ico s={12} sw={1.3}><path d="M3 1l5 5-5 5" /></Ico></button>
          <NavTitle>Navigation Pane</NavTitle>
        </NavPane>
        <Splitter />
        <Workspace>
          <MdiWindow title="" controls={false} $x={640} $y={71} $w={130} $h={540}>
            <LauncherBody />
          </MdiWindow>

          <MdiWindow title="Form1" icon={formIcon} gap={10} $x={13} $y={13} $w={681} $h={733}>
            <FormHeader>Form 1 (Modern Chart)</FormHeader>
            <FormBody>
              <ChartFrame><ModernChart /></ChartFrame>
            </FormBody>
          </MdiWindow>

          <MdiWindow title="Report2" icon={reportIcon} gap={12} $flush $x={715} $y={14} $w={634} $h={740}>
            <ReportArea>
              <Paper>
                <ReportTitle>Report 2 (Classic Chart)</ReportTitle>
                <ReportChart><ClassicChart /></ReportChart>
              </Paper>
            </ReportArea>
            <RecordBar>
              <PageLabel htmlFor="page">Page:</PageLabel>
              <RecordButton $w={19} aria-label="First"><Ico s={8} c={G}><path d="M1.500 1v6" /><path fill={G} stroke="none" d="M7 1v6L3 4z" /></Ico></RecordButton>
              <RecordButton aria-label="Previous"><Ico s={8}><path fill={G} stroke="none" d="M6 1v6L2 4z" /></Ico></RecordButton>
              <PageInput id="page" defaultValue="1" />
              <RecordButton $w={22} aria-label="Next"><Ico s={8}><path fill={G} stroke="none" d="M2 1v6l4-3z" /></Ico></RecordButton>
              <RecordButton aria-label="Last"><Ico s={8} c={G}><path d="M6.500 1v6" /><path fill={G} stroke="none" d="M1 1v6l4-3z" /></Ico></RecordButton>
              <RecordButton aria-label="New"><Ico w={12} h={8} c="#e8d3b0"><path fill={G} stroke="none" d="M0 1v6l4-3z" /><path d="M8.500 1v6M5.500 4h6M6.500 2l4 4M10.500 2l-4 4" /></Ico></RecordButton>
              <FilterButton>
                <Ico s={16} c="#8c8c8c"><path fill="#fafafa" d="M.5 1.500h14L9.500 8v7l-3-2V8z" /><path stroke={G} strokeWidth="1.500" d="M10 10l5 5M15 10l-5 5" /></Ico>
                No Filter
              </FilterButton>
            </RecordBar>
          </MdiWindow>
        </Workspace>
      </Body>

      <StatusBar>
        Ready
        <Grow />
        {VIEWS.map(([name, icon]) => (
          <ViewButton key={name} aria-label={name} $on={name === "Print Preview"}>{icon}</ViewButton>
        ))}
        <ZoomStep aria-label="Zoom out"><Ico s={10}><path d="M1 4.500h8" /></Ico></ZoomStep>
        <ZoomRange type="range" min="0" max="100" defaultValue="28" aria-label="Zoom" />
        <ZoomStep aria-label="Zoom in"><Ico s={10}><path d="M1 4.500h8M4.500 1v8" /></Ico></ZoomStep>
        <ZoomValue>59%</ZoomValue>
      </StatusBar>

      <Taskbar>
        <Start aria-label="Start"><svg width="16" height="16" viewBox="0 0 16 16" aria-hidden="true"><path d="M0 2l7-1v6.500H0zM8 1l8-1v7.500H8zM0 8.500h7V15l-7-1zM8 8.500h8V16l-8-1z" /></svg></Start>
        <SearchBox>
          <Lens s={17} c="#111" />
          <SearchInput placeholder="Search" aria-label="Search" />
        </SearchBox>
        {TASKS.map(([name, icon, run, on]) => (
          <TaskButton key={name} aria-label={name} $run={run} $on={on}>{icon}</TaskButton>
        ))}
        <Tray>
          <TrayItem $w={24} aria-label="Hidden icons"><Ico s={12} c="#111"><path d="M.5 8.500L6 3l5.500 5.500" /></Ico></TrayItem>
          <TrayItem $w={24} aria-label="Teams">{tile("#3f47a8", "T", <><circle cx="13.500" cy="3" r="2" fill="#3f47a8" /><circle cx="9" cy="3" r="2.500" fill="#5b62c8" /><path fill="#5b62c8" d="M6 6h11v7H7z" /><circle cx="12.500" cy="12.500" r="5" fill="#d1344b" /><path fill="#fff" d="M10 14.500c1-1 .5-4.500 2.500-4.500s1.500 3.500 2.500 4.500z" /></>)}</TrayItem>
          <TrayItem $w={24} aria-label="Volume"><Ico s={18} c="#111"><path d="M1.500 6.500H4L8 3v12l-4-3.500H1.500zM10.500 6.500q2 2.500 0 5M12.500 4.500q4 4.500 0 9M14.500 3q5 6 0 12" /></Ico></TrayItem>
          <TrayItem $w={31} aria-label="Keyboard"><Ico w={24} h={14} c="#111"><rect x=".5" y=".5" width="22" height="12" rx="1" /><path strokeDasharray="1 1" d="M3 3.500h17M3 6.500h17" /><path d="M6 9.500h11" /></Ico></TrayItem>
          <TrayItem $w={37}>ENG</TrayItem>
          <TrayItem $w={39}>12:27</TrayItem>
          <TrayItem $w={39} aria-label="Notifications"><Ico s={18} c="#fff"><path fill="#000" stroke="none" d="M1 1h16v12h-9l-3 3v-3H1z" /><path d="M4 4.500h10M4 7.500h10M4 10.500h5" /><circle cx="13.500" cy="12.500" r="3.500" fill="#000" /></Ico></TrayItem>
          <ShowDesktop />
        </Tray>
      </Taskbar>
    </Shell>
  );
}
